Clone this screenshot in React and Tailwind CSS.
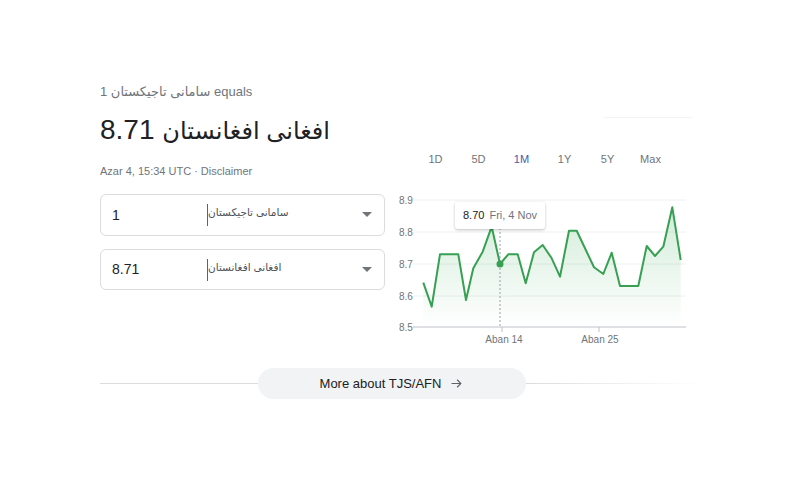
import React from 'react';

const font = { fontFamily: '"Liberation Sans", "DejaVu Sans", Arial, sans-serif' };

const pts = [
  [33.3, 92.7], [41.7, 116.7], [50, 64.3], [68.3, 64.3], [76, 110], [83.3, 78.3], [92.7, 61.7],
  [101.7, 36.7], [110, 74], [118.3, 64.3], [127.7, 64.3], [135.7, 93.3], [144, 62.3], [152.7, 55],
  [161.7, 68.3], [170, 86.7], [179, 40.7], [186.7, 40.7], [195, 58.3], [204, 77.3], [213.3, 84],
  [221.7, 62.7], [230, 96], [248.3, 96], [256.7, 56], [265, 66], [273.3, 56.7], [282.3, 17.3],
  [290.7, 70],
];

const linePath = pts.map((p, i) => `${i ? 'L' : 'M'}${p[0]} ${p[1]}`).join(' ');
const areaPath = `${linePath} L290.7 137 L33.3 137 Z`;

const tabs = ['1D', '5D', '1M', '1Y', '5Y', 'Max'];

const Caret = () => (
  <svg width="10" height="6" viewBox="0 0 10 6" className="mr-[12px]">
    <path d="M0 0 L10 0 L5 5 Z" fill="#70757a" />
  </svg>
);

const CurrencyBox = ({ value, name, className }) => (
  <div className={`flex items-center border border-[#dadce0] rounded-[6px] ${className}`}>
    <div className="w-[106px] pl-[11px] text-[14px] text-[#202124]">{value}</div>
    <div className="flex-1 flex items-center justify-between h-[22px]">
      <div className="h-full border-l border-[#5f6368] text-[10.5px] leading-[16px] text-[#4d5156]">{name}</div>
      <Caret />
    </div>
  </div>
);

const Chart = () => (
  <div className="relative mt-[20px] w-[310px] h-[160px]">
    <svg width="310" height="160" viewBox="0 0 310 160">
      <defs>
        <linearGradient id="fill" x1="0" y1="0" x2="0" y2="1">
          <stop offset="0" stopColor="#34a853" stopOpacity="0.22" />
          <stop offset="1" stopColor="#34a853" stopOpacity="0" />
        </linearGradient>
      </defs>
      {[10, 42, 74, 106].map((y) => (
        <line key={y} x1="23" x2="296" y1={y} y2={y} stroke="#eef0f1" strokeWidth="1" />
      ))}
      <line x1="23" x2="296" y1="137" y2="137" stroke="#bdc1c6" strokeWidth="1" />
      <line x1="112" x2="112" y1="137" y2="142" stroke="#bdc1c6" strokeWidth="1" />
      <line x1="209" x2="209" y1="137" y2="142" stroke="#bdc1c6" strokeWidth="1" />
      {[['8.9', 10], ['8.8', 42], ['8.7', 74], ['8.6', 106], ['8.5', 137]].map(([t, y]) => (
        <text key={t} x="9" y={y + 4} fontSize="10" fill="#70757a" style={font}>{t}</text>
      ))}
      <text x="114" y="153" fontSize="10" fill="#70757a" textAnchor="middle" style={font}>Aban 14</text>
      <text x="210" y="153" fontSize="10" fill="#70757a" textAnchor="middle" style={font}>Aban 25</text>
      <path d={areaPath} fill="url(#fill)" />
      <line x1="110" x2="110" y1="30" y2="137" stroke="#9aa0a6" strokeWidth="1" strokeDasharray="2 2" />
      <path d={linePath} fill="none" stroke="#37a052" strokeWidth="2" strokeLinejoin="round" />
      <circle cx="110" cy="74" r="3.5" fill="#37a052" />
    </svg>
    <div className="absolute left-[65px] top-[12px] h-[27px] px-[8px] flex items-center gap-[5px] bg-white rounded-[3px] shadow-[0_1px_3px_rgba(0,0,0,0.25)] text-[11px] whitespace-nowrap">
      <span className="text-[#202124]">8.70</span>
      <span className="text-[#70757a]">Fri, 4 Nov</span>
    </div>
  </div>
);

export default function App() {
  return (
    <div className="w-[800px] h-[500px] bg-white overflow-hidden" style={font}>
      <div className="pt-[84px] px-[100px]">
        <div className="flex">
          <div className="w-[285px]">
            <div className="text-[13px] leading-[16px] text-[#70757a]">1 سامانی تاجیکستان equals</div>
            <div className="mt-[12px] h-[36px] text-[28px] leading-[36px] text-[#202124]">
              8.71 <span className="text-[24px]">افغانی افغانستان</span>
            </div>
            <div className="mt-[16px] text-[11px] leading-[14px] text-[#70757a]">Azar 4, 15:34 UTC · Disclaimer</div>
            <CurrencyBox value="1" name="سامانی تاجیکستان" className="mt-[16px] h-[42px]" />
            <CurrencyBox value="8.71" name="افغانی افغانستان" className="mt-[13px] h-[41px]" />
          </div>
          <div className="ml-[5px] w-[310px]">
            <div className="mt-[33px] ml-[214px] w-[88px] h-px bg-[#f1f3f4]" />
            <div className="mt-[30px] flex pl-[24px] h-[22px] items-center text-[11px]">
              {tabs.map((t) => (
                <div
                  key={t}
                  className={`w-[43px] text-center ${t === '1M' ? 'text-[#4a5aa8]' : 'text-[#70757a]'}`}
                >
                  {t}
                </div>
              ))}
            </div>
            <Chart />
          </div>
        </div>
        <div className="mt-[18px] flex items-center">
          <div className="w-[158px] h-px bg-[#dadce0]" />
          <div className="w-[268px] h-[31px] rounded-full bg-[#f1f3f4] flex items-center justify-center gap-[8px]">
            <span className="text-[13px] text-[#202124]">More about TJS/AFN</span>
            <svg width="15" height="15" viewBox="0 0 24 24" fill="none" stroke="#5f6368" strokeWidth="1.8">
              <path d="M4 12 H19 M13 6 L19 12 L13 18" />
            </svg>
          </div>
          <div className="flex-1 h-px bg-gradient-to-r from-[#dadce0] to-transparent" />
        </div>
      </div>
    </div>
  );
}
